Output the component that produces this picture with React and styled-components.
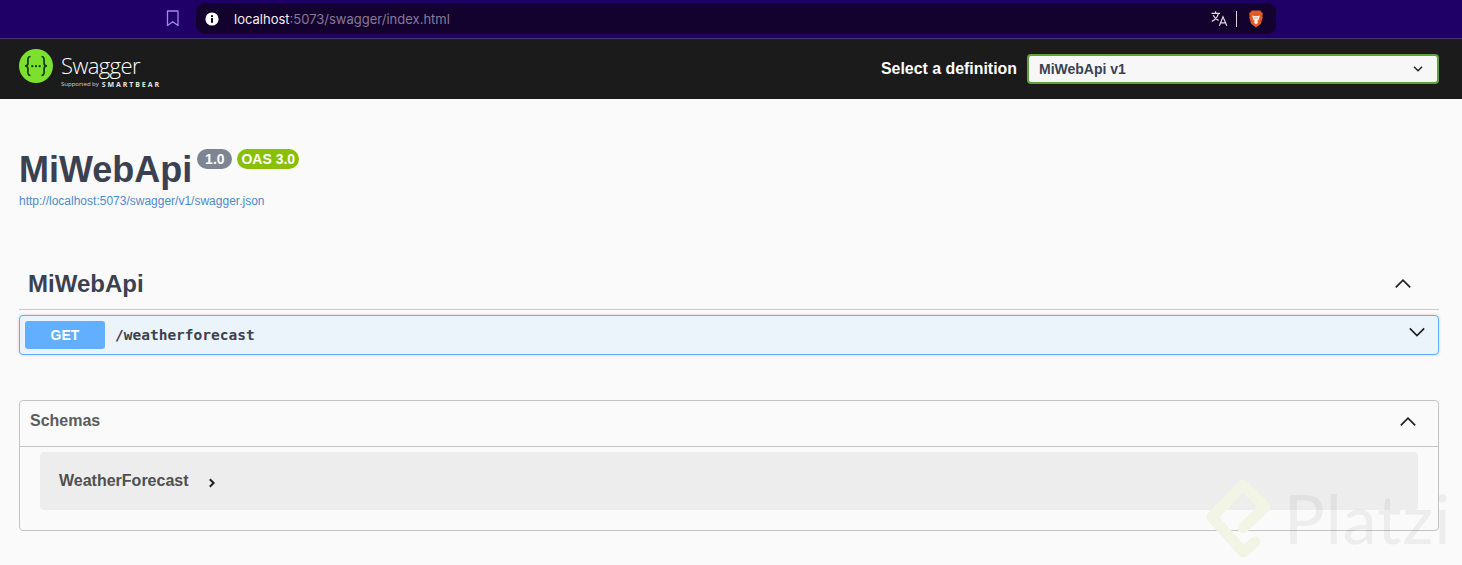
import React from "react";
import styled, { createGlobalStyle } from "styled-components";

const Global = createGlobalStyle`
  html, body { margin: 0; padding: 0; background: #fafafa; overflow: hidden; }
  body { font-family: "Liberation Sans", Arial, sans-serif; }
  * { box-sizing: border-box; }
`;

const Page = styled.div`
  position: relative;
  width: 1462px;
  height: 565px;
  overflow: hidden;
  background: #fafafa;
`;

const BrowserBar = styled.div`
  height: 39px;
  background: #1e0066;
  border-bottom: 1px solid #46366f;
  display: flex;
  align-items: flex-start;
  padding: 3px 0 0 165px;
`;

const BookmarkSlot = styled.div`
  width: 31px;
  height: 30px;
  display: flex;
  align-items: center;
  color: #a585f0;
`;

const AddressBar = styled.div`
  width: 1080px;
  height: 31px;
  background: #14022e;
  border-radius: 9px;
  display: flex;
  align-items: center;
  padding: 0 12px 0 9px;
  font-family: "Inter", "Noto Sans", sans-serif;
  font-size: 13px;
`;

const UrlHost = styled.span`
  color: #f2eef8;
  margin-left: 15px;
`;

const UrlRest = styled.span`
  color: #85799a;
  flex: 1;
`;

const AddressDivider = styled.span`
  width: 1px;
  height: 16px;
  background: #d9d4e2;
  margin: 0 11px 0 8px;
`;

const TopBar = styled.header`
  height: 60px;
  background: #1b1b1b;
  display: flex;
  align-items: center;
  justify-content: space-between;
  padding: 0 23px 0 19px;
`;

const Brand = styled.div`
  align-self: flex-start;
  margin-top: 10px;
  display: flex;
  align-items: flex-start;
  gap: 8px;
`;

const BrandText = styled.div`
  display: flex;
  flex-direction: column;
  color: #fff;
  padding-top: 3px;
`;

const BrandName = styled.span`
  font-family: "Open Sans", sans-serif;
  font-weight: 300;
  font-size: 22px;
  line-height: 26px;
  letter-spacing: -0.6px;
`;

const BrandSub = styled.span`
  display: flex;
  align-items: center;
  gap: 3px;
  margin-top: 2px;
  font-family: "Open Sans", sans-serif;
  font-size: 6px;
  line-height: 9px;
  color: #d8d8d8;
  white-space: nowrap;
`;

const BrandCompany = styled.span`
  font-size: 7px;
  font-weight: 700;
  letter-spacing: 1.9px;
  color: #e6e6e6;
`;

const DefinitionPicker = styled.div`
  display: flex;
  align-items: center;
  gap: 10px;
`;

const PickerLabel = styled.span`
  color: #fff;
  font-size: 15.9px;
  font-weight: 700;
`;

const PickerBox = styled.div`
  width: 412px;
  height: 30px;
  background: #f7f7f7;
  border: 2px solid #62a03f;
  border-radius: 4px;
  display: flex;
  align-items: center;
  justify-content: space-between;
  padding: 0 14px 0 10px;
  color: #3b4151;
  font-size: 14px;
  font-weight: 700;
`;

const Content = styled.main`
  padding: 0 23px 0 19px;
`;

const Info = styled.section`
  padding-top: 50px;
  height: 161px;
`;

const TitleRow = styled.div`
  display: flex;
  align-items: flex-start;
`;

const Title = styled.h1`
  margin: 0;
  color: #3b4151;
  font-size: 36px;
  font-weight: 700;
  line-height: 42px;
`;

const Badge = styled.span`
  height: 20px;
  margin: 0 0 0 5px;
  padding: 0 4px;
  min-width: ${(p) => p.$width}px;
  border-radius: 10px;
  background: ${(p) => p.$color};
  color: #fff;
  font-size: 14px;
  font-weight: 700;
  line-height: 20px;
  text-align: center;
`;

const SpecLink = styled.a`
  display: block;
  color: #4a8bcb;
  font-size: 12px;
  line-height: 14px;
  margin-top: 3px;
`;

const TagHeader = styled.div`
  height: 50px;
  border-bottom: 1px solid #c8c9cd;
  display: flex;
  align-items: center;
  justify-content: space-between;
  padding: 0 27px 1px 9px;
  color: #3b4151;
`;

const TagName = styled.h3`
  margin: 0;
  font-size: 24px;
  font-weight: 700;
`;

const TagToggle = styled.span`
  display: flex;
  margin-bottom: 2px;
`;

const Operation = styled.div`
  margin-top: 5px;
  height: 40px;
  border: 1px solid #61affe;
  border-radius: 4px;
  background: #ebf3fb;
  box-shadow: 0 0 3px rgba(0, 0, 0, 0.19);
  display: flex;
  align-items: center;
  justify-content: space-between;
  padding: 0 12px 0 5px;
`;

const OpLeft = styled.div`
  display: flex;
  align-items: center;
  gap: 10px;
`;

const OpToggle = styled.span`
  display: flex;
  margin-bottom: 6px;
`;

const MethodTag = styled.span`
  width: 80px;
  height: 28px;
  border-radius: 3px;
  background: #61affe;
  color: #fff;
  font-size: 14px;
  font-weight: 700;
  line-height: 28px;
  text-align: center;
`;

const OpPath = styled.span`
  color: #3b4151;
  font-family: "DejaVu Sans Mono", "Liberation Mono", monospace;
  font-size: 14.5px;
  font-weight: 700;
`;

const Schemas = styled.section`
  margin-top: 45px;
  height: 131px;
  border: 1px solid #c4c4c4;
  border-radius: 4px;
`;

const SchemasHeader = styled.div`
  height: 46px;
  border-bottom: 1px solid #c4c4c4;
  display: flex;
  align-items: center;
  justify-content: space-between;
  padding: 0 21px 5px 10px;
  color: #5c5c5c;
  font-size: 16px;
  font-weight: 700;
`;

const SchemaRow = styled.div`
  margin: 5px 20px 0;
  height: 58px;
  background: #ededed;
  border-radius: 4px;
  display: flex;
  align-items: center;
  gap: 19px;
  padding-left: 19px;
  color: #505050;
  font-size: 16px;
  font-weight: 700;
`;

const ArrowSlot = styled.span`
  display: flex;
  margin-top: 3px;
`;

const Watermark = styled.div`
  position: absolute;
  left: 1203px;
  top: 476px;
  display: flex;
  align-items: center;
  gap: 13px;
  pointer-events: none;
`;

const WatermarkText = styled.span`
  font-family: "Lato", "Open Sans", sans-serif;
  font-size: 68px;
  line-height: 78px;
  letter-spacing: 1px;
  color: rgba(70, 70, 70, 0.07);
`;

const Chevron = ({ up, size = 20, stroke = 1.8, color = "#1f1f1f" }) => (
  <svg width={size} height={size * 0.6} viewBox="0 0 20 12" fill="none">
    <path
      d={up ? "M2 10.5 L10 2.5 L18 10.5" : "M2 1.5 L10 9.5 L18 1.5"}
      stroke={color}
      strokeWidth={stroke}
    />
  </svg>
);

const ExpandArrow = () => (
  <svg width="8" height="10" viewBox="0 0 8 10" fill="none">
    <path d="M1.8 1.2 L5.6 5 L1.8 8.8" stroke="#222" strokeWidth="2" />
  </svg>
);

const SwaggerMark = () => (
  <svg width="34" height="34" viewBox="0 0 34 34">
    <circle cx="17" cy="17" r="17" fill="#7ce02e" />
    <g fill="none" stroke="#173a12" strokeWidth="1.7">
      <path d="M11.5 7.5 C8 7.5 9 11.5 9 14 C9 16 8 17 6 17 C8 17 9 18 9 20 C9 22.5 8 26.5 11.5 26.5" />
      <path d="M22.5 7.5 C26 7.5 25 11.5 25 14 C25 16 26 17 28 17 C26 17 25 18 25 20 C25 22.5 26 26.5 22.5 26.5" />
    </g>
    <g fill="#173a12">
      <circle cx="13.3" cy="17.2" r="1.15" />
      <circle cx="17" cy="17.2" r="1.15" />
      <circle cx="20.7" cy="17.2" r="1.15" />
    </g>
  </svg>
);

const InfoDot = () => (
  <svg width="14" height="14" viewBox="0 0 14 14">
    <circle cx="7" cy="7" r="6.6" fill="#fff" />
    <rect x="6" y="6" width="2" height="4.8" fill="#14022e" />
    <rect x="6" y="3.2" width="2" height="1.8" fill="#14022e" />
  </svg>
);

const BookmarkIcon = () => (
  <svg width="16" height="17" viewBox="0 0 16 17" fill="none">
    <path d="M2.5 1 H13 V15.5 L7.75 11.8 L2.5 15.5 Z" stroke="currentColor" strokeWidth="1.3" strokeLinejoin="round" />
  </svg>
);

const TranslateIcon = () => (
  <svg width="17" height="15" viewBox="0 0 17 15" fill="none" stroke="#dcd8e2" strokeWidth="1.2">
    <path d="M0.5 2.4 H9 M4.6 0.3 V2.4 M7.4 2.4 C6.6 6 4.2 8.8 0.8 10.4 M2.2 4.2 C3.2 6.6 5.2 8.2 7.6 9.4" />
    <path d="M8.4 14.8 L12 5.8 L15.8 14.8 M9.6 11.8 H14.6" />
  </svg>
);

const BraveIcon = () => (
  <svg width="16" height="18" viewBox="0 0 15 18">
    <path d="M3.4 0.6 H11.6 L14.4 3.6 L13.8 6 L14.2 7.4 L12.4 13.8 L7.5 17.6 L2.6 13.8 L0.8 7.4 L1.2 6 L0.6 3.6 Z" fill="#e2592a" />
    <path d="M3.6 5.4 L6 6 H9 L11.4 5.4 L10.2 9.6 L8.8 11 L9.6 12.4 L7.5 14.6 L5.4 12.4 L6.2 11 L4.8 9.6 Z" fill="#fbeee6" />
    <path d="M6 8 H7 M8 8 H9" stroke="#e2592a" strokeWidth="1" />
  </svg>
);

const PlatziMark = () => (
  <svg width="68" height="84" viewBox="0 0 68 84" fill="none">
    <path
      d="M40 52 L62 31 L40 9 L9 41 L40 76 L52 66"
      stroke="#f2f5e6"
      strokeWidth="11"
      strokeLinejoin="round"
      strokeLinecap="round"
    />
  </svg>
);

export default function App() {
  return (
    <Page>
      <Global />
      <BrowserBar>
        <BookmarkSlot>
          <BookmarkIcon />
        </BookmarkSlot>
        <AddressBar>
          <InfoDot />
          <UrlHost>localhost</UrlHost>
          <UrlRest>:5073/swagger/index.html</UrlRest>
          <TranslateIcon />
          <AddressDivider />
          <BraveIcon />
        </AddressBar>
      </BrowserBar>
      <TopBar>
        <Brand>
          <SwaggerMark />
          <BrandText>
            <BrandName>Swagger</BrandName>
            <BrandSub>
              Supported by <BrandCompany>SMARTBEAR</BrandCompany>
            </BrandSub>
          </BrandText>
        </Brand>
        <DefinitionPicker>
          <PickerLabel>Select a definition</PickerLabel>
          <PickerBox>
            MiWebApi v1
            <Chevron size={10} stroke={3} color="#222" />
          </PickerBox>
        </DefinitionPicker>
      </TopBar>
      <Content>
        <Info>
          <TitleRow>
            <Title>MiWebApi</Title>
            <Badge $width={35} $color="#7d8492">1.0</Badge>
            <Badge $width={62} $color="#89bf04">OAS 3.0</Badge>
          </TitleRow>
          <SpecLink>http://localhost:5073/swagger/v1/swagger.json</SpecLink>
        </Info>
        <TagHeader>
          <TagName>MiWebApi</TagName>
          <TagToggle>
            <Chevron up size={18} />
          </TagToggle>
        </TagHeader>
        <Operation>
          <OpLeft>
            <MethodTag>GET</MethodTag>
            <OpPath>/weatherforecast</OpPath>
          </OpLeft>
          <OpToggle>
            <Chevron size={18} />
          </OpToggle>
        </Operation>
        <Schemas>
          <SchemasHeader>
            Schemas
            <Chevron up size={18} />
          </SchemasHeader>
          <SchemaRow>
            WeatherForecast
            <ArrowSlot>
              <ExpandArrow />
            </ArrowSlot>
          </SchemaRow>
        </Schemas>
      </Content>
      <Watermark>
        <PlatziMark />
        <WatermarkText>Platzi</WatermarkText>
      </Watermark>
    </Page>
  );
}
